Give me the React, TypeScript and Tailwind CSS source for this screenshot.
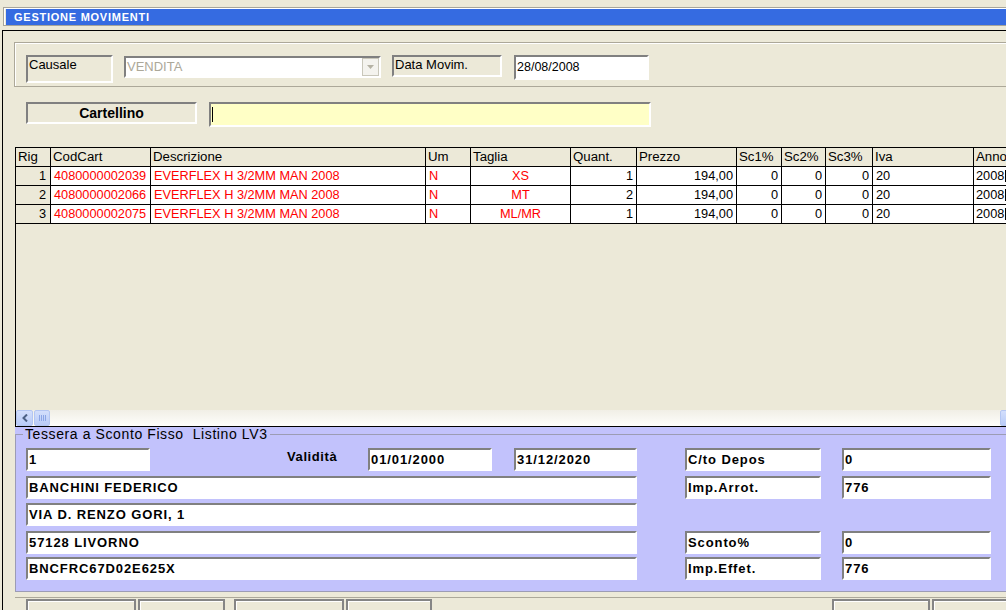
import React from 'react';

const sunken = 'border-2 border-t-[#808080] border-l-[#808080] border-r-white border-b-white';

const cols = [
  { w: 'w-[35px]', label: 'Rig', align: 'justify-end pr-[4px]', red: false },
  { w: 'w-[100px]', label: 'CodCart', align: 'justify-start pl-[3px]', red: true },
  { w: 'w-[275px]', label: 'Descrizione', align: 'justify-start pl-[3px]', red: true },
  { w: 'w-[45px]', label: 'Um', align: 'justify-start pl-[3px]', red: true },
  { w: 'w-[100px]', label: 'Taglia', align: 'justify-center', red: true },
  { w: 'w-[66px]', label: 'Quant.', align: 'justify-end pr-[3px]', red: false },
  { w: 'w-[100px]', label: 'Prezzo', align: 'justify-end pr-[3px]', red: false },
  { w: 'w-[45px]', label: 'Sc1%', align: 'justify-end pr-[3px]', red: false },
  { w: 'w-[44px]', label: 'Sc2%', align: 'justify-end pr-[3px]', red: false },
  { w: 'w-[47px]', label: 'Sc3%', align: 'justify-end pr-[3px]', red: false },
  { w: 'w-[101px]', label: 'Iva', align: 'justify-start pl-[3px]', red: false },
  { w: 'w-[100px]', label: 'Anno', align: 'justify-start pl-[2px]', red: false },
];

const rows = [
  ['1', '4080000002039', 'EVERFLEX H 3/2MM MAN 2008', 'N', 'XS', '1', '194,00', '0', '0', '0', '20', '2008'],
  ['2', '4080000002066', 'EVERFLEX H 3/2MM MAN 2008', 'N', 'MT', '2', '194,00', '0', '0', '0', '20', '2008'],
  ['3', '4080000002075', 'EVERFLEX H 3/2MM MAN 2008', 'N', 'ML/MR', '1', '194,00', '0', '0', '0', '20', '2008'],
];

const btn = 'shrink-0 h-[14px] border-2 border-[#858585] border-b-0 shadow-[inset_1px_1px_0_#ffffff]';

function Field({ w, children }: { w: string; children?: React.ReactNode }) {
  return (
    <div className={`${w} shrink-0 h-[23px] ${sunken} bg-white flex items-center pl-[1px] text-[13px] font-bold tracking-[0.9px] text-black whitespace-nowrap overflow-hidden`}>
      {children}
    </div>
  );
}

function RightPair({ label, value }: { label: string; value: string }) {
  return (
    <div className="flex shrink-0 ml-[48px]">
      <Field w="w-[136px]">{label}</Field>
      <div className="ml-[21px]">
        <Field w="w-[149px]">{value}</Field>
      </div>
    </div>
  );
}

export default function App() {
  return (
    <div className="w-[1006px] h-[610px] bg-[#ECE9D8] overflow-hidden font-['Liberation_Sans',Arial,sans-serif] text-black">
      <div className="h-[7px]" />

      {/* Title bar */}
      <div className="pl-[3px]">
        <div className="border-t border-l border-b border-[#A7A59A]">
          <div className="border-t border-l border-white pl-[1px]">
            <div className="h-[16px] bg-[#356BE1] flex items-center pl-[8px] text-white text-[11px] font-bold tracking-[0.75px] leading-none">
              GESTIONE MOVIMENTI
            </div>
          </div>
        </div>
      </div>

      {/* Main panel */}
      <div className="mt-[4px] ml-[2px] border-l border-t border-black h-[580px] overflow-hidden">
        {/* Causale group */}
        <div className="mt-[11px] ml-[11px] w-[1000px] h-[45px] border border-[#ACA899] shadow-[inset_1px_1px_0_#ffffff] flex items-start pt-[12px] pl-[11px]">
          <div className={`w-[87px] h-[28px] ${sunken} text-[13px] leading-[16px] pl-[1px]`}>Causale</div>
          <div className={`ml-[11px] mt-[1px] w-[257px] h-[22px] ${sunken} bg-white flex items-center`}>
            <span className="flex-1 pl-[1px] text-[13px] text-[#ACA899]">VENDITA</span>
            <div className="w-[17px] h-[18px] bg-[#F4F3EE] border border-[#C9C7BA] flex items-center justify-center">
              <svg width="7" height="4" viewBox="0 0 7 4">
                <path d="M0 0h7L3.5 4z" fill="#B5B2A4" />
              </svg>
            </div>
          </div>
          <div className={`ml-[11px] w-[110px] h-[22px] ${sunken} text-[13px] leading-[16px] pl-[1px]`}>Data Movim.</div>
          <div className={`ml-[12px] w-[135px] h-[25px] ${sunken} bg-white flex items-center pl-[1px] text-[12.5px]`}>28/08/2008</div>
        </div>

        {/* Cartellino */}
        <div className="mt-[15px] ml-[23px] flex items-start">
          <div className={`w-[171px] h-[22px] ${sunken} flex items-center justify-center text-[14px] font-bold`}>Cartellino</div>
          <div className={`ml-[12px] w-[442px] h-[25px] ${sunken} bg-[#FFFFC6] flex items-center`}>
            <div className="ml-[1px] w-[1px] h-[15px] bg-black" />
          </div>
        </div>

        {/* Grid */}
        <div className="mt-[20px] ml-[12px] w-[1000px] h-[280px] border-l border-t border-b border-black flex flex-col text-[12.75px]">
          <div className="flex h-[19px] border-b border-black text-[13.25px]">
            {cols.map((c) => (
              <div key={c.label} className={`${c.w} shrink-0 h-full border-r border-black flex items-center pl-[2px] leading-none`}>
                {c.label}
              </div>
            ))}
          </div>
          {rows.map((r, i) => (
            <div key={i} className="flex h-[19px] border-b border-black">
              {cols.map((c, j) => (
                <div
                  key={c.label}
                  className={`${c.w} shrink-0 h-full border-r border-black flex items-center leading-none ${c.align} ${j === 0 ? 'bg-[#ECE9D8]' : 'bg-white'} ${c.red ? 'text-[#FF0000]' : 'text-black'}`}
                >
                  {r[j]}
                  {j === 11 && <span className="ml-[1px] w-[1px] h-[12px] bg-black" />}
                </div>
              ))}
            </div>
          ))}
          <div className="flex-1" />
          {/* horizontal scrollbar */}
          <div className="h-[16px] flex bg-gradient-to-b from-[#F1EFE6] to-[#FEFEFB]">
            <div className="shrink-0 w-[17px] h-full rounded-[2px] border border-[#B4C6F2] bg-gradient-to-b from-[#D3DFFC] to-[#B9CBF7] flex items-center justify-center">
              <svg width="6" height="8" viewBox="0 0 6 8">
                <path d="M5 0.5L1.5 4 5 7.5" stroke="#4D6185" strokeWidth="2" fill="none" />
              </svg>
            </div>
            <div className="shrink-0 ml-[1px] w-[16px] h-full rounded-[2px] border border-[#B4C6F2] bg-gradient-to-b from-[#D3DFFC] to-[#B9CBF7] flex items-center justify-center gap-[1px]">
              <span className="w-[1px] h-[6px] bg-[#8CA6E6]" />
              <span className="w-[1px] h-[6px] bg-[#8CA6E6]" />
              <span className="w-[1px] h-[6px] bg-[#8CA6E6]" />
              <span className="w-[1px] h-[6px] bg-[#8CA6E6]" />
            </div>
            <div className="shrink-0 w-[950px]" />
            <div className="shrink-0 w-[17px] h-full rounded-[2px] border border-[#B4C6F2] bg-gradient-to-b from-[#D3DFFC] to-[#B9CBF7]" />
          </div>
        </div>

        {/* Tessera */}
        <div className="ml-[12px] w-[1000px] h-[165px] bg-[#C2C2FC]">
          <fieldset className="h-[165px] border border-[#9C9CB4]">
            <legend className="ml-[7px] px-[2px] text-[14px] leading-[14px] tracking-[0.6px] whitespace-pre">Tessera a Sconto Fisso  Listino LV3</legend>

            <div className="pl-[10px]">
              <div className="flex mt-[7px]">
                <div className="w-[611px] shrink-0 flex items-start">
                  <Field w="w-[124px]">1</Field>
                  <div className="w-[137px] shrink-0" />
                  <div className="w-[81px] shrink-0 text-[13px] font-bold tracking-[0.6px] leading-[16px] pt-[1px]">Validità</div>
                  <Field w="w-[124px]">01/01/2000</Field>
                  <div className="w-[22px] shrink-0" />
                  <Field w="w-[123px]">31/12/2020</Field>
                </div>
                <RightPair label="C/to Depos" value="0" />
              </div>

              <div className="flex mt-[5px]">
                <Field w="w-[611px]">BANCHINI FEDERICO</Field>
                <RightPair label="Imp.Arrot." value="776" />
              </div>

              <div className="flex mt-[4px]">
                <Field w="w-[611px]">VIA D. RENZO GORI, 1</Field>
              </div>

              <div className="flex mt-[5px]">
                <Field w="w-[611px]">57128 LIVORNO</Field>
                <RightPair label="Sconto%" value="0" />
              </div>

              <div className="flex mt-[3px]">
                <Field w="w-[611px]">BNCFRC67D02E625X</Field>
                <RightPair label="Imp.Effet." value="776" />
              </div>
            </div>
          </fieldset>
        </div>

        {/* Bottom buttons */}
        <div className="mt-[5px] ml-[12px] w-[1000px] border-t border-[#ACA899] pt-[1px] pl-[11px] flex">
          <div className={`${btn} w-[110px]`} />
          <div className={`${btn} ml-[2px] w-[87px]`} />
          <div className={`${btn} ml-[9px] w-[110px]`} />
          <div className={`${btn} ml-[2px] w-[86px]`} />
          <div className={`${btn} ml-[400px] w-[98px]`} />
          <div className={`${btn} ml-[2px] w-[100px]`} />
        </div>
      </div>
    </div>
  );
}
